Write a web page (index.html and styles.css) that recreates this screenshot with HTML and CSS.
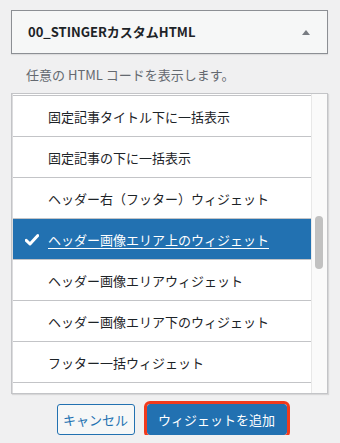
FILE: index.html
```html
<!DOCTYPE html>
<html lang="ja">

<head>
    <meta charset="UTF-8">
    <meta name="viewport" content="width=device-width, initial-scale=1.0">
    <title>ウィジェットを追加</title>
    <link rel="stylesheet" href="styles.css">
</head>

<body>
    <div class="panel">
        <div class="widget-top">
            <h3 class="widget-title">00_STINGERカスタムHTML</h3>
            <span class="toggle-arrow"></span>
        </div>

        <p class="widget-desc">任意の HTML コードを表示します。</p>

        <div class="area-box">
            <ul class="area-list">
                <li>固定記事タイトル下に一括表示</li>
                <li>固定記事の下に一括表示</li>
                <li>ヘッダー右（フッター）ウィジェット</li>
                <li class="selected">
                    <svg class="check" width="14" height="12" viewBox="0 0 14 12">
                        <path d="M1.2 6.4 L5 10 L12.8 1.6" fill="none" stroke="#fff" stroke-width="3" stroke-linejoin="round" stroke-linecap="round"/>
                    </svg>
                    <span>ヘッダー画像エリア上のウィジェット</span>
                </li>
                <li>ヘッダー画像エリアウィジェット</li>
                <li>ヘッダー画像エリア下のウィジェット</li>
                <li>フッター一括ウィジェット</li>
                <li class="next-row"></li>
            </ul>
            <div class="scroll-track">
                <div class="scroll-thumb"></div>
            </div>
        </div>

        <div class="actions">
            <button class="btn btn-cancel">キャンセル</button>
            <button class="btn btn-add">ウィジェットを追加</button>
        </div>
    </div>
</body>

</html>
```

FILE: styles.css
```css
body {
    margin: 0;
    background: #f0f0f1;
    font-family: "Noto Sans CJK JP", sans-serif;
    color: #1d2327;
}

.panel {
    padding: 10px 12px 0 11px;
}

.widget-top {
    height: 42px;
    display: flex;
    align-items: center;
    justify-content: space-between;
    padding: 0 17px 0 16px;
    background: #f6f7f7;
    border: 1px solid #8c8f94;
    box-shadow: 0 1px 1px rgba(0, 0, 0, 0.08);
}

.widget-title {
    margin: 0;
    font-size: 13px;
    font-weight: 700;
    line-height: 20px;
}

.toggle-arrow {
    width: 0;
    height: 0;
    border-left: 4px solid transparent;
    border-right: 4px solid transparent;
    border-bottom: 5px solid #787c82;
}

.widget-desc {
    margin: 11px 0 0 15px;
    font-size: 13px;
    line-height: 20px;
    color: #646970;
}

.area-box {
    display: flex;
    height: 299px;
    margin-top: 8px;
    background: #fff;
    border: 1px solid #c3c4c7;
    box-shadow: 1px 1px 1px rgba(0, 0, 0, 0.1);
    overflow: hidden;
}

.area-list {
    flex: 1;
    margin: 0;
    padding: 1px 0 0;
    list-style: none;
    border-left: 1px solid #dcdcde;
}

.area-list li {
    display: flex;
    align-items: center;
    height: 40px;
    padding-left: 35px;
    font-size: 13px;
    border-top: 1px solid #c3c4c7;
}

.area-list li.next-row {
    height: 10px;
}

.area-list li.selected {
    position: relative;
    background: #2271b1;
    color: #fff;
}

.area-list li.selected span {
    text-decoration: underline;
    text-underline-offset: 3px;
}

.check {
    position: absolute;
    left: 12px;
    top: 15px;
}

.scroll-track {
    width: 15px;
    background: #fafafa;
    border-left: 1px solid #e8e8e8;
    position: relative;
}

.scroll-thumb {
    position: absolute;
    left: 3px;
    top: 122px;
    width: 8px;
    height: 53px;
    border-radius: 4px;
    background: #c1c1c1;
}

.actions {
    display: flex;
    justify-content: center;
    align-items: center;
    gap: 12px;
    margin-top: 10px;
    padding-left: 4px;
}

.btn {
    height: 31px;
    border-radius: 3px;
    font-family: "Noto Sans CJK JP", sans-serif;
    font-size: 13px;
    line-height: 29px;
    padding: 0;
    white-space: nowrap;
    cursor: pointer;
}

.btn-cancel {
    width: 78px;
    background: #f6f7f7;
    color: #2271b1;
    border: 1px solid #2271b1;
}

.btn-add {
    width: 140px;
    background: #2271b1;
    color: #fff;
    border: 1px solid #2271b1;
    outline: 3px solid #f23a1c;
    outline-offset: 0;
}
```
